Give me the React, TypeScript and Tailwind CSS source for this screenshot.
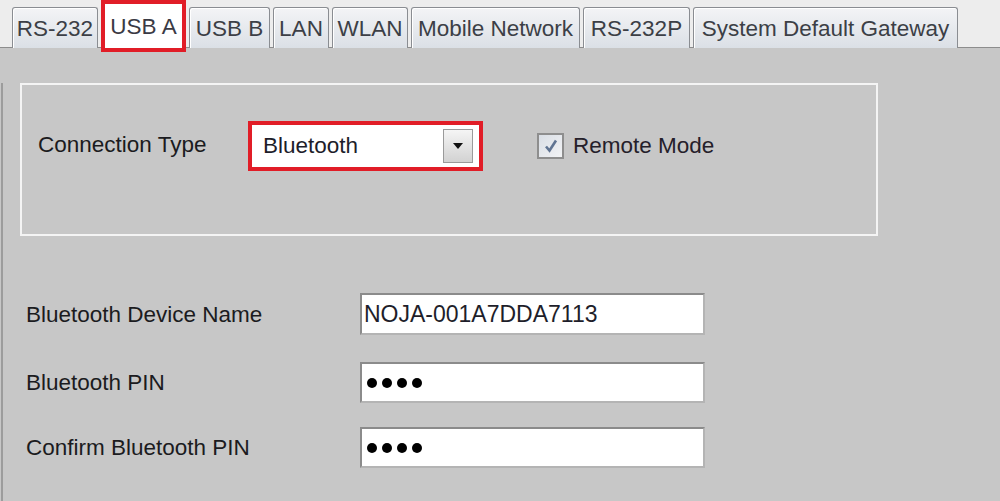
const tabs = [
  { label: "RS-232", w: "w-[86px]" },
  { label: "USB A", w: "w-[85px]", selected: true },
  { label: "USB B", w: "w-[81px]" },
  { label: "LAN", w: "w-[56px]" },
  { label: "WLAN", w: "w-[76px]" },
  { label: "Mobile Network", w: "w-[169px]" },
  { label: "RS-232P", w: "w-[107px]" },
  { label: "System Default Gateway", w: "w-[265px]" },
];

const fields = [
  { label: "Bluetooth Device Name", value: "NOJA-001A7DDA7113", mt: "mt-[57px]", h: "h-[42px]" },
  { label: "Bluetooth PIN", dots: 4, mt: "mt-[27px]", h: "h-[41px]" },
  { label: "Confirm Bluetooth PIN", dots: 4, mt: "mt-[24px]", h: "h-[41px]" },
];

function Tab({ label, w, selected }: { label: string; w: string; selected?: boolean }) {
  if (selected) {
    // selected tab, with the red highlight box drawn round it
    return (
      <div
        className={`${w} relative z-10 h-[52px] border-[4px] border-[#e11d27] bg-white flex items-center justify-center pt-[3px] text-[#3a3a44]`}
      >
        {label}
      </div>
    );
  }
  return (
    <div
      className={`${w} mt-[7px] h-[41px] rounded-t-[3px] border border-b-0 border-[#8a8d92] bg-gradient-to-b from-[#f3f4f6] to-[#dbe0e6] shadow-[inset_1px_1px_0_#ffffff] flex items-center justify-center pt-[3px] text-[#3c3f46]`}
    >
      {label}
    </div>
  );
}

export default function App() {
  return (
    <div
      className="w-[1000px] h-[501px] overflow-hidden bg-[#c7c7c7] text-[22.5px] leading-none text-[#1b1b20]"
      style={{ fontFamily: '"Liberation Sans", Arial, sans-serif' }}
    >
      {/* ── tab strip ── */}
      <div className="h-[48px] bg-[#ededed] border-b border-[#8d8d8d] flex items-start gap-[3px] pl-[12px]">
        {tabs.map((t) => (
          <Tab key={t.label} {...t} />
        ))}
      </div>

      <div className="h-[452px] ml-[1px] border-l-2 border-[#9c9c9c]">
        {/* ── connection group ── */}
        <div className="ml-[17px] mt-[35px] w-[858px] h-[153px] border-2 border-[#f4f4f4] pt-[36px] pl-[16px] flex items-start">
          <div className="w-[210px] h-[50px] flex items-center pb-[1px]">Connection Type</div>
          <div className="w-[235px] h-[50px] border-[4px] border-[#e11d27] bg-white flex items-center pl-[11px] pr-[6px]">
            <span className="flex-1 text-[#1d1d2a]">Bluetooth</span>
            <div className="w-[30px] h-[34px] border border-[#9a9a9a] bg-gradient-to-b from-[#f5f5f5] to-[#d2d2d2] flex items-center justify-center">
              <svg width="10" height="6" viewBox="0 0 10 6">
                <path d="M0 0h10L5 6z" fill="#111" />
              </svg>
            </div>
          </div>
          <div className="ml-[54px] h-[50px] flex items-center gap-[9px]">
            <div className="w-[27px] h-[26px] border-2 border-[#8e8e8e] bg-gradient-to-br from-[#d9dee5] to-[#f2f3f5] flex items-center justify-center">
              <svg width="16" height="16" viewBox="0 0 16 16">
                <path d="M3 8.5l3.5 4L13 2.5" stroke="#607492" strokeWidth="2.6" fill="none" />
              </svg>
            </div>
            <span className="text-[#25202a]">Remote Mode</span>
          </div>
        </div>

        {/* ── bluetooth fields ── */}
        {fields.map((f) => (
          <div key={f.label} className={`${f.mt} flex items-center`}>
            <div className="w-[357px] pl-[23px] pt-[2px]">{f.label}</div>
            <div
              className={`${f.h} w-[345px] border-2 border-[#8b8b8b] border-b-[#b4b4b4] border-r-[#b4b4b4] bg-white flex items-center pl-[2px] text-[23px] text-[#1e1e2a]`}
            >
              {f.value ?? (
                <div className="flex gap-[5px] pl-[3px]">
                  {Array.from({ length: f.dots ?? 0 }).map((_, i) => (
                    <span key={i} className="w-[10px] h-[10px] rounded-full bg-black" />
                  ))}
                </div>
              )}
            </div>
          </div>
        ))}
      </div>
    </div>
  );
}
